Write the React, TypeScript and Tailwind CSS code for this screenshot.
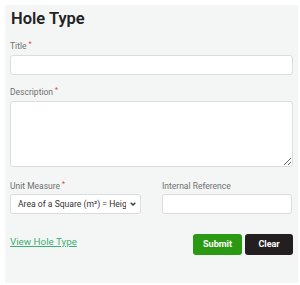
const font = { fontFamily: 'Roboto, "Liberation Sans", sans-serif' }

const Label = ({ text, required }: { text: string; required?: boolean }) => (
  <label className="block text-[8.5px] leading-[12px] text-[#707070]">
    {text}
    {required && <span className="ml-[2px] align-top text-[7px] leading-[8px] text-[#e53935]">*</span>}
  </label>
)

export default function App() {
  return (
    <div className="min-h-[285px] bg-white pt-[5px] pl-[5px]" style={font}>
      <div className="h-[278px] w-[293px] bg-[#f4f6f6] px-[5px]">
        <h1 className="pl-[1px] text-[16.5px] font-semibold leading-[28px] text-[#222]">
          Hole Type
        </h1>

        <div className="mt-[7px]">
          <Label text="Title" required />
          <input className="mt-[3px] block h-[20px] w-full rounded-[3px] border border-[#dcdcdc] bg-white outline-none" />
        </div>

        <div className="mt-[11px]">
          <Label text="Description" required />
          <textarea className="mt-[3px] block h-[66px] w-full rounded-[3px] border border-[#dcdcdc] bg-white outline-none" />
        </div>

        <div className="mt-[13px] grid grid-cols-[131px_130px] gap-x-[21px]">
          <div>
            <Label text="Unit Measure" required />
            <div className="relative mt-[2px]">
              <select className="block h-[20px] w-full appearance-none rounded-[3px] border border-[#dcdcdc] bg-white pl-[7px] pr-[14px] text-[8.6px] text-[#333] outline-none">
                <option>Area of a Square (m²) = Height x Width</option>
              </select>
              <svg
                className="pointer-events-none absolute right-[5px] top-[8px]"
                width="6"
                height="4"
                viewBox="0 0 6 4"
              >
                <path d="M0.7 0.7 L3 3 L5.3 0.7" fill="none" stroke="#333" strokeWidth="1.3" />
              </svg>
            </div>
          </div>
          <div>
            <Label text="Internal Reference" />
            <input className="mt-[2px] block h-[20px] w-full rounded-[3px] border border-[#dcdcdc] bg-white outline-none" />
          </div>
        </div>

        <div className="mt-[20px] flex items-start justify-between">
          <a href="#" className="mt-[1px] text-[9.8px] leading-[14px] text-[#3fae70] underline">
            View Hole Type
          </a>
          <div className="flex gap-[3px]">
            <button className="h-[21px] w-[49px] rounded-[3px] bg-[#2a9a12] text-[9px] font-bold text-white">
              Submit
            </button>
            <button className="h-[21px] w-[48px] rounded-[3px] bg-[#231f20] text-[9px] font-bold text-white">
              Clear
            </button>
          </div>
        </div>
      </div>
    </div>
  )
}
